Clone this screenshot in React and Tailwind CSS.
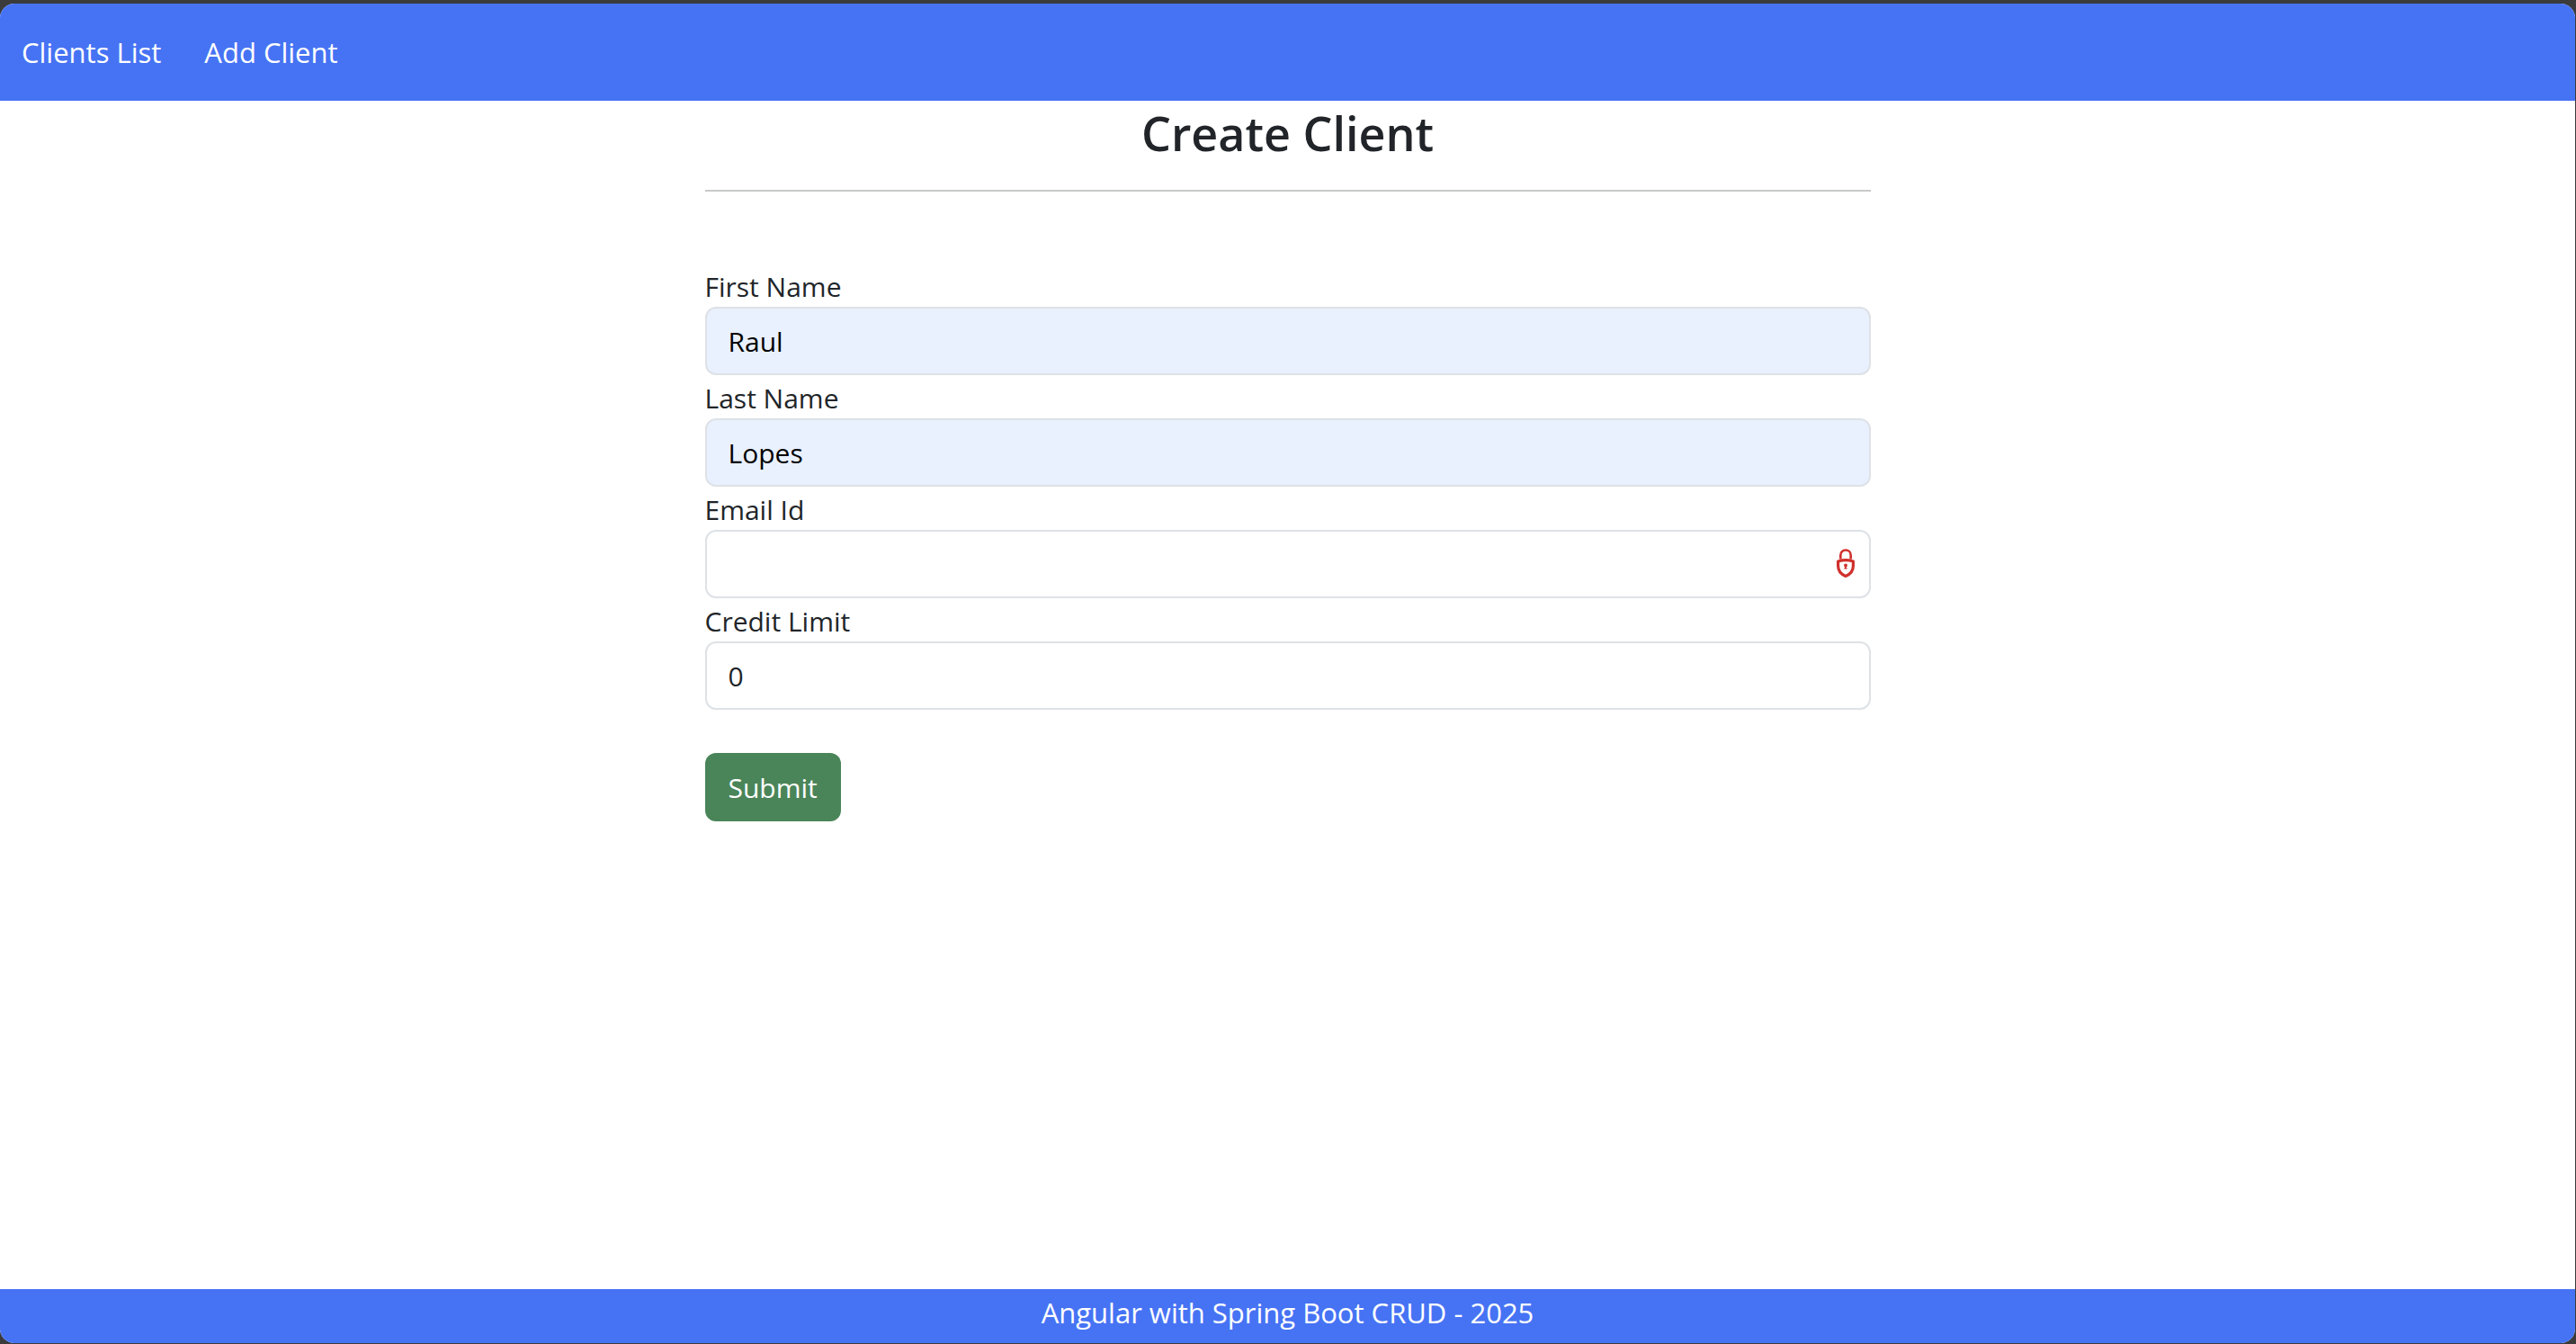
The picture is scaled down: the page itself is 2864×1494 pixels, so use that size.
import { useId } from "react";

const fields = [
  { label: "First Name", name: "firstName", value: "Raul", filled: true },
  { label: "Last Name", name: "lastName", value: "Lopes", filled: true },
  { label: "Email Id", name: "email", value: "", locked: true },
  { label: "Credit Limit", name: "creditLimit", value: "0" },
];

function LockIcon() {
  return (
    <svg
      viewBox="0 0 20 32"
      className="pointer-events-none absolute top-[21px] right-[18px] h-8 w-5"
      fill="none"
      stroke="#d0312d"
      aria-hidden="true"
    >
      <path d="M4.300 11.500V7.200C4.300 4 6.700 1.500 10 1.500S15.700 4 15.700 7.200V11.500" strokeWidth="2.600" />
      <path
        d="M1.600 14Q10 11.200 18.400 14V19C18.400 24.600 14.600 28.600 10 30.400C5.400 28.600 1.600 24.600 1.600 19Z"
        strokeWidth="3.200"
        strokeLinejoin="round"
      />
      <circle cx="10" cy="18.500" r="1.900" fill="#d0312d" stroke="none" />
      <path d="M10 18V22.500M8.500 21.800H11.500" strokeWidth="1.600" />
    </svg>
  );
}

function Field({ label, name, value, filled, locked }) {
  const id = useId();
  return (
    <div>
      <label htmlFor={id} className="block h-12 leading-[52px]">
        {label}
      </label>
      <div className="relative">
        <input
          id={id}
          name={name}
          type="text"
          defaultValue={value}
          className={
            filled
              ? "block h-[76px] w-full rounded-xl border-2 border-[#dee2e6] bg-[#e9f0fe] px-6 text-black"
              : "block h-[76px] w-full rounded-xl border-2 border-[#dee2e6] bg-white px-6 text-[#212529]"
          }
        />
        {locked && <LockIcon />}
      </div>
    </div>
  );
}

export default function App() {
  return (
    <div className="flex min-h-screen flex-col bg-[#3b3b3b] pt-1 pr-px pb-px font-['Open_Sans','Noto_Sans',sans-serif] text-[30px] text-[#212529]">
      <div className="flex flex-1 flex-col overflow-hidden rounded-2xl bg-white">
        <nav className="flex h-[108px] items-center gap-12 bg-[#4673f4] px-6 text-[31px] text-white">
          <a href="#clients">Clients List</a>
          <a href="#add">Add Client</a>
        </nav>
        <main className="mx-auto w-full max-w-[1296px] flex-1">
          <h2 className="h-[99px] text-center text-[52px] leading-[72px] font-semibold">
            Create Client
          </h2>
          <hr className="border-t-2 border-[#c8c9ca]" />
          <form className="pt-20" onSubmit={(e) => e.preventDefault()}>
            {fields.map((field) => (
              <Field key={field.name} {...field} />
            ))}
            <button
              type="submit"
              className="mt-12 h-[76px] rounded-xl bg-[#4a8559] px-[26px] text-white"
            >
              Submit
            </button>
          </form>
        </main>
        <footer className="h-[60px] bg-[#4673f4] text-center text-[31px] leading-[52px] text-white">
          Angular with Spring Boot CRUD - 2025
        </footer>
      </div>
    </div>
  );
}
